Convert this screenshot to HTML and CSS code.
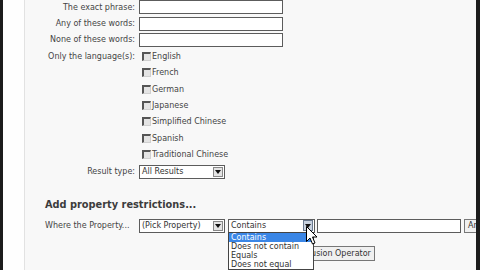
FILE: index.html
```html
<!DOCTYPE html>
<html>
<head>
<meta charset="utf-8">
<link rel="stylesheet" href="styles.css">
</head>
<body>
<div class="frame">
  <div class="edge"></div>
  <div class="gutter"></div>
  <div class="main">
    <div class="form">
      <div class="row"><span class="lbl">The exact phrase:</span><span class="input"></span></div>
      <div class="row"><span class="lbl">Any of these words:</span><span class="input"></span></div>
      <div class="row"><span class="lbl">None of these words:</span><span class="input"></span></div>
      <div class="row"><span class="lbl">Only the language(s):</span><span class="check"><i class="box"></i>English</span></div>
      <div class="row"><span class="lbl"></span><span class="check"><i class="box"></i>French</span></div>
      <div class="row"><span class="lbl"></span><span class="check"><i class="box"></i>German</span></div>
      <div class="row"><span class="lbl"></span><span class="check"><i class="box"></i>Japanese</span></div>
      <div class="row"><span class="lbl"></span><span class="check"><i class="box"></i>Simplified Chinese</span></div>
      <div class="row"><span class="lbl"></span><span class="check"><i class="box"></i>Spanish</span></div>
      <div class="row"><span class="lbl"></span><span class="check"><i class="box"></i>Traditional Chinese</span></div>
      <div class="row result"><span class="lbl">Result type:</span><span class="select"><span class="val">All Results</span><span class="arrow"><svg width="6" height="4" viewBox="0 0 6 4"><path d="M0 0H6L3 4Z" fill="#111"/></svg></span></span></div>
    </div>
    <h3 class="heading">Add property restrictions...</h3>
    <div class="prop-row">
      <span class="lbl left">Where the Property...</span>
      <span class="select"><span class="val">(Pick Property)</span><span class="arrow"><svg width="6" height="4" viewBox="0 0 6 4"><path d="M0 0H6L3 4Z" fill="#111"/></svg></span></span>
      <span class="select op">
        <span class="val">Contains</span><span class="arrow hot"><svg width="6" height="4" viewBox="0 0 6 4"><path d="M0 0H6L3 4Z" fill="#111"/></svg></span>
        <span class="list">
          <span class="opt sel">Contains</span>
          <span class="opt">Does not contain</span>
          <span class="opt">Equals</span>
          <span class="opt">Does not equal</span>
        </span>
        <svg class="cursor" width="12" height="19" viewBox="0 0 12 19"><path d="M0.5 0.5V15.5L4 12L6.5 18L9 17L6.5 11H11Z" fill="#fff" stroke="#000" stroke-width="1"/></svg>
      </span>
      <span class="input wide"></span>
      <span class="btn">And</span>
    </div>
    <div class="op-row">
      <span class="btn add">Add Inclusion Operator</span>
    </div>
  </div>
  <div class="edge right"></div>
</div>
</body>
</html>
```

FILE: styles.css
```css
html, body {
  margin: 0;
  padding: 0;
  width: 480px;
  height: 270px;
  overflow: hidden;
}
body {
  font-family: "DejaVu Sans", Verdana, sans-serif;
  font-size: 8px;
  color: #444;
  background: #f8f8f8;
}
.frame {
  display: flex;
  height: 270px;
}
.edge {
  width: 3px;
  background: #1c1c1c;
  flex: none;
}
.edge.right {
  width: 4px;
}
.gutter {
  width: 21px;
  background: #fefefe;
  border-right: 1px solid #e2e2e2;
  flex: none;
}
.main {
  flex: 1;
  overflow: hidden;
  position: relative;
  background: #f8f8f8;
}
.form {
  margin-top: -1px;
}
.row {
  display: flex;
  align-items: center;
  height: 16.4px;
}
.row.result {
  height: 18px;
}
.lbl {
  width: 110px;
  flex: none;
  text-align: right;
  margin-right: 4px;
  white-space: nowrap;
}
.lbl.left {
  text-align: left;
  padding-left: 20px;
  width: 90px;
}
.input {
  display: block;
  width: 142px;
  height: 12px;
  border: 1px solid #5c5c5c;
  background: #fff;
  flex: none;
}
.input.wide {
  width: 142px;
  margin-left: 2px;
}
.check {
  display: flex;
  align-items: center;
  margin-left: 3px;
}
.box {
  display: block;
  width: 6px;
  height: 6px;
  border-style: solid;
  border-width: 2px 1px 1px 2px;
  border-color: #555 #d0d0d0 #d0d0d0 #555;
  background: #e4e4e4;
  margin-right: 1px;
}
.select {
  position: relative;
  display: flex;
  align-items: center;
  width: 84px;
  height: 12px;
  border: 1px solid #5c5c5c;
  background: #fff;
  flex: none;
}
.select .val {
  flex: 1;
  padding-left: 2px;
  white-space: nowrap;
  overflow: hidden;
  color: #333;
}
.arrow {
  display: flex;
  align-items: center;
  justify-content: center;
  width: 8px;
  height: 8px;
  border: 1px solid #888;
  background: #e4e4e4;
  margin-right: 1px;
}
.arrow.hot {
  background: #c8d2e0;
  border-color: #6a7a90;
  height: 9px;
}
.heading {
  margin: 17px 0 0 20px;
  font-size: 9.8px;
  font-weight: bold;
  color: #3c3c3c;
  height: 14px;
  line-height: 14px;
}
.prop-row {
  display: flex;
  align-items: center;
  margin-top: 7px;
  height: 14px;
}
.select.op {
  margin-left: 3px;
  width: 85px;
}
.list {
  position: absolute;
  left: -1px;
  top: 12px;
  width: 84px;
  border: 1px solid #444;
  background: #fff;
  z-index: 3;
  display: flex;
  flex-direction: column;
}
.opt {
  height: 9px;
  line-height: 9px;
  padding-left: 2px;
  color: #333;
  white-space: nowrap;
}
.opt.sel {
  background: #3a86e6;
  color: #fff;
}
.cursor {
  position: absolute;
  left: 77px;
  top: 6px;
  z-index: 4;
}
.btn {
  display: flex;
  align-items: center;
  height: 12px;
  padding: 0 3px;
  border: 1px solid #777;
  background: #f0f0f0;
  margin-left: 3px;
  flex: none;
  white-space: nowrap;
  color: #333;
}
.op-row {
  display: flex;
  margin-top: 13px;
  padding-left: 250px;
}
.btn.add {
  margin-left: 0;
  height: 13px;
}
```
